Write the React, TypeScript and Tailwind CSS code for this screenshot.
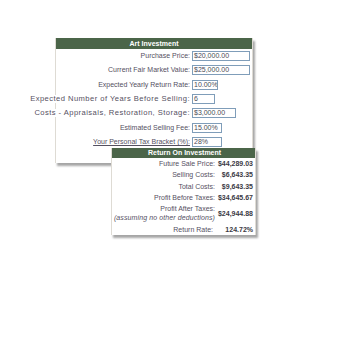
const inputs = [
  { label: 'Purchase Price:', value: '$20,000.00', w: 'w-[58px]', wide: false },
  { label: 'Current Fair Market Value:', value: '$25,000.00', w: 'w-[58px]', wide: false },
  { label: 'Expected Yearly Return Rate:', value: '10.00%', w: 'w-[26px]', wide: false },
  { label: 'Expected Number of Years Before Selling:', value: '6', w: 'w-[23px]', wide: true },
  { label: 'Costs - Appraisals, Restoration, Storage:', value: '$3,000.00', w: 'w-[44px]', wide: true },
  { label: 'Estimated Selling Fee:', value: '15.00%', w: 'w-[30px]', wide: false },
]

const results = [
  { label: 'Future Sale Price:', value: '$44,289.03' },
  { label: 'Selling Costs:', value: '$6,643.35' },
  { label: 'Total Costs:', value: '$9,643.35' },
  { label: 'Profit Before Taxes:', value: '$34,645.67' },
]

const Field = ({ value, w }: { value: string; w: string }) => (
  <div className={`${w} h-[10px] border border-[#7f9db9] bg-white pl-[1px] text-[7px] leading-[8px] text-[#4a4a55] whitespace-nowrap overflow-hidden`}>
    {value}
  </div>
)

const App = () => {
  return (
    <div className="w-[350px] h-[350px] bg-white pl-[28px] font-['Liberation_Sans',Arial,sans-serif] text-[#55505f]">
      <div className="w-full h-full overflow-hidden pt-[38px] pl-[27px]">
        {/* Art Investment */}
        <div className="relative w-[198px] bg-white border-l border-r border-[#dedbd4] pb-[14px] shadow-[2px_3px_2px_rgba(0,0,0,0.35)]">
          <div className="h-[11px] bg-[#4b6549] text-white font-bold text-[7px] leading-[11px] text-center">
            Art Investment
          </div>
          {inputs.map((row) => (
            <div key={row.label} className="flex items-center h-[14.33px]">
              <div className="w-[136px] shrink-0 flex justify-end whitespace-nowrap text-[7px] leading-[8px] pr-[2px]">
                <span className={row.wide ? 'bg-white text-[7.6px] tracking-[0.45px]' : ''}>{row.label}</span>
              </div>
              <Field value={row.value} w={row.w} />
            </div>
          ))}
          <div className="flex items-center h-[14.33px]">
            <div className="w-[136px] shrink-0 flex justify-end whitespace-nowrap text-[7px] leading-[8px] pr-[2px]">
              <span className="underline">Your Personal Tax Bracket (%):</span>
            </div>
            <Field value="28%" w="w-[30px]" />
          </div>
        </div>

        {/* Return On Investment */}
        <div className="relative z-10 -mt-[15px] ml-[56px] w-[145px] bg-white border-l border-r border-[#dedbd4] shadow-[2px_3px_2px_rgba(0,0,0,0.35)]">
          <div className="h-[10px] bg-[#4b6549] text-white font-bold text-[7px] leading-[10px] pl-[36px]">
            Return On Investment
          </div>
          {results.map((row) => (
            <div key={row.label} className="flex items-center h-[11.4px] text-[7px] leading-[8px]">
              <div className="w-[103px] shrink-0 text-right whitespace-nowrap">{row.label}</div>
              <div className="flex-1 text-right pr-[2px] font-bold text-[#3b3a44] whitespace-nowrap">{row.value}</div>
            </div>
          ))}
          <div className="flex items-center h-[19px] text-[7px] leading-[9px]">
            <div className="w-[103px] shrink-0 text-right whitespace-nowrap">
              <div>Profit After Taxes:</div>
              <div className="italic tracking-[0.1px]">(assuming no other deductions)</div>
            </div>
            <div className="flex-1 text-right pr-[2px] font-bold text-[#3b3a44] whitespace-nowrap">$24,944.88</div>
          </div>
          <div className="flex items-center h-[12px] pt-[2px] text-[7px] leading-[8px]">
            <div className="w-[101px] shrink-0 text-right whitespace-nowrap">Return Rate:</div>
            <div className="flex-1 text-right pr-[2px] font-bold text-[#3b3a44] whitespace-nowrap">124.72%</div>
          </div>
        </div>
      </div>
    </div>
  )
}

export default App
